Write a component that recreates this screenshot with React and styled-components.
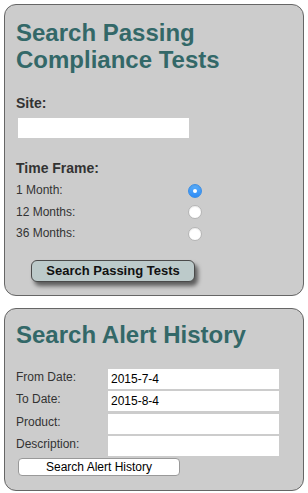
import React from "react";
import styled, { createGlobalStyle } from "styled-components";

const Global = createGlobalStyle`
  html, body { margin: 0; padding: 0; background: #ffffff; }
  body { font-family: "Liberation Sans", Arial, Helvetica, sans-serif; color: #333; }
  * { box-sizing: border-box; }
`;

const Page = styled.div`
  padding: 4px;
  display: flex;
  flex-direction: column;
  gap: 12px;
  width: 308px;
`;

const Panel = styled.section`
  width: 300px;
  height: ${(p) => p.$h}px;
  background: #cccccc;
  border: 1px solid #666666;
  border-radius: 12px;
  padding: ${(p) => p.$pt}px 11px 0 11px;
  display: flex;
  flex-direction: column;
`;

const Title = styled.h2`
  margin: 0;
  font-size: 24px;
  line-height: 27px;
  font-weight: bold;
  color: #336868;
`;

const FieldLabel = styled.div`
  margin-top: ${(p) => p.$mt}px;
  font-size: 14px;
  line-height: 16px;
  font-weight: bold;
  color: #333;
`;

const SiteInput = styled.input`
  margin: 7px 0 0 2px;
  width: 171px;
  height: 20px;
  border: none;
  background: #fff;
  outline: none;
  padding: 0 3px;
  font: 12px "Liberation Sans", Arial, sans-serif;
`;

const RadioGrid = styled.div`
  margin-top: 4px;
  display: grid;
  grid-template-columns: 172px 14px;
  grid-auto-rows: 21.5px;
  align-items: center;
`;

const RadioLabel = styled.label`
  font-size: 12px;
  line-height: 21.5px;
  color: #333;
`;

const Radio = styled.input.attrs({ type: "radio" })`
  appearance: none;
  -webkit-appearance: none;
  margin: 0;
  width: 14px;
  height: 14px;
  border-radius: 50%;
  background: #fff;
  border: 1px solid #b4b4b4;
  box-shadow: inset 0 1px 1px rgba(0, 0, 0, 0.08);
  display: grid;
  place-items: center;
  &:checked {
    border-color: #3a8ee6;
    background: linear-gradient(#5aaefb, #2f8cf5);
  }
  &:checked::after {
    content: "";
    width: 4px;
    height: 4px;
    border-radius: 50%;
    background: #fff;
  }
`;

const ShadowButton = styled.button`
  margin: 15px 0 0 15px;
  width: 164px;
  height: 22px;
  border: 1px solid #4a4a4a;
  border-radius: 6px;
  background: #bccaca;
  box-shadow: 3px 4px 4px rgba(0, 0, 0, 0.55);
  font: bold 13px "Liberation Sans", Arial, sans-serif;
  color: #111;
  padding: 0;
`;

const FormGrid = styled.div`
  margin-top: 21px;
  display: grid;
  grid-template-columns: 92px 171px;
  grid-auto-rows: 20px;
  row-gap: 2.3px;
`;

const RowLabel = styled.label`
  font-size: 12px;
  line-height: 16px;
  color: #333;
  align-self: start;
`;

const TextInput = styled.input`
  width: 171px;
  height: 20px;
  border: none;
  outline: none;
  background: #fff;
  padding: 0 3px;
  font: 12px "Liberation Sans", Arial, sans-serif;
  color: #000;
`;

const PlainButton = styled.button`
  margin: 2px 0 0 2px;
  width: 162px;
  height: 18px;
  background: #fff;
  border: 1px solid #999;
  border-radius: 4px;
  font: 12px "Liberation Sans", Arial, sans-serif;
  color: #000;
  padding: 0;
`;

const timeFrames = ["1 Month:", "12 Months:", "36 Months:"];
const alertFields = [
  ["From Date:", "2015-7-4"],
  ["To Date:", "2015-8-4"],
  ["Product:", ""],
  ["Description:", ""],
];

export default function App() {
  return (
    <>
      <Global />
      <Page>
        <Panel $h={292} $pt={14}>
          <Title>
            Search Passing
            <br />
            Compliance Tests
          </Title>
          <FieldLabel $mt={22}>Site:</FieldLabel>
          <SiteInput type="text" />
          <FieldLabel $mt={22}>Time Frame:</FieldLabel>
          <RadioGrid>
            {timeFrames.map((t, i) => (
              <React.Fragment key={t}>
                <RadioLabel>{t}</RadioLabel>
                <Radio name="tf" defaultChecked={i === 0} />
              </React.Fragment>
            ))}
          </RadioGrid>
          <div>
            <ShadowButton>Search Passing Tests</ShadowButton>
          </div>
        </Panel>
        <Panel $h={183} $pt={12}>
          <Title>Search Alert History</Title>
          <FormGrid>
            {alertFields.map(([l, v]) => (
              <React.Fragment key={l}>
                <RowLabel>{l}</RowLabel>
                <TextInput type="text" defaultValue={v} />
              </React.Fragment>
            ))}
          </FormGrid>
          <div>
            <PlainButton>Search Alert History</PlainButton>
          </div>
        </Panel>
      </Page>
    </>
  );
}
